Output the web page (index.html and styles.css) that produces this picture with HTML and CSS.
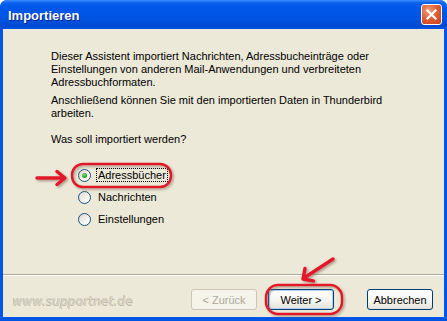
FILE: index.html
```html
<!DOCTYPE html>
<html>
<head>
    <title>Importieren</title>
    <link rel="stylesheet" href="styles.css">
</head>
<body>
    <div class="window">
        <div class="titlebar">
            <span class="title">Importieren</span>
            <span class="close-btn">
                <svg width="13" height="13" viewBox="0 0 13 13">
                    <path d="M2.5 2.5 L10.5 10.5 M10.5 2.5 L2.5 10.5" stroke="#fff" stroke-width="2.2" stroke-linecap="square"/>
                </svg>
            </span>
        </div>

        <div class="client">
            <div class="main">
                <p class="intro">Dieser Assistent importiert Nachrichten, Adressbucheinträge oder Einstellungen von anderen Mail-Anwendungen und verbreiteten Adressbuchformaten.</p>
                <p class="intro second">Anschließend können Sie mit den importierten Daten in Thunderbird arbeiten.</p>
                <p class="question">Was soll importiert werden?</p>

                <div class="radio-list">
                    <div class="radio-row">
                        <span class="radio checked"></span>
                        <span class="label focused">Adressbücher</span>
                    </div>
                    <div class="radio-row">
                        <span class="radio"></span>
                        <span class="label">Nachrichten</span>
                    </div>
                    <div class="radio-row">
                        <span class="radio"></span>
                        <span class="label">Einstellungen</span>
                    </div>
                </div>
            </div>

            <div class="separator"></div>

            <div class="footer">
                <span class="watermark">www.supportnet.de</span>
                <button class="btn back" disabled>&lt; Zurück</button>
                <button class="btn next">Weiter &gt;</button>
                <button class="btn cancel">Abbrechen</button>
            </div>
        </div>

        <!-- red marks drawn over the screenshot -->
        <svg class="marks" width="447" height="321" viewBox="0 0 447 321">
            <defs>
                <filter id="shadow" x="-20%" y="-20%" width="140%" height="140%">
                    <feDropShadow dx="1.5" dy="1.5" stdDeviation="1" flood-color="#7a6a5a" flood-opacity="0.6"/>
                </filter>
            </defs>
            <g fill="none" stroke="#e3182a" stroke-linecap="round" stroke-linejoin="round" filter="url(#shadow)">
                <rect x="72" y="164" width="99" height="23" rx="11" stroke-width="2.5"/>
                <rect x="266" y="285" width="76" height="29" rx="12" stroke-width="2.5"/>
                <path d="M37 178 H64 M57 171.5 L65 178 L57 184.5" stroke-width="3.5"/>
                <path d="M333 259 L304 278 M305 268.5 L303 279 L313.5 281" stroke-width="3.5"/>
            </g>
        </svg>
    </div>
</body>
</html>
```

FILE: styles.css
```css
body {
    margin: 0;
    font-family: "Liberation Sans", Arial, sans-serif;
    font-size: 11px;
    color: #000;
}

.window {
    position: relative;
    width: 447px;
    height: 321px;
    display: flex;
    flex-direction: column;
    background-color: #0055e5;
    border-radius: 7px 7px 0 0;
    overflow: hidden;
}

.titlebar {
    height: 29px;
    flex-shrink: 0;
    display: flex;
    align-items: center;
    justify-content: space-between;
    padding: 0 5px 0 8px;
    background: linear-gradient(#3b8dff 0, #0a61ec 3px, #0058e9 7px, #0053e1 20px, #0049cf 26px, #0053e3 29px);
}

.title {
    color: #fff;
    font-weight: bold;
    font-size: 13px;
    text-shadow: 1px 1px 0 #0a1e8c;
    margin-top: 1px;
}

.close-btn {
    width: 19px;
    height: 19px;
    border: 1px solid #fff;
    border-radius: 3px;
    display: flex;
    align-items: center;
    justify-content: center;
    background: radial-gradient(circle at 35% 30%, #f0a080 0, #e0603a 45%, #c23d17 100%);
}

.client {
    flex: 1;
    margin: 0 3px 4px 3px;
    background-color: #ece9d8;
    display: flex;
    flex-direction: column;
}

.main {
    height: 245px;
    padding: 21px 0 0 48px;
    box-sizing: border-box;
}

p {
    margin: 0;
    line-height: 13px;
    width: 345px;
}

.intro.second {
    margin-top: 5px;
}

.question {
    margin-top: 13px;
}

.radio-list {
    margin: 18px 0 0 27px;
}

.radio-row {
    height: 22px;
    display: flex;
    align-items: center;
}

.radio {
    width: 11px;
    height: 11px;
    border: 1px solid #1c5180;
    border-radius: 50%;
    background: linear-gradient(135deg, #dcd8cc 0, #f4f3ee 60%, #ffffff 100%);
    display: flex;
    align-items: center;
    justify-content: center;
    margin-right: 5px;
}

.radio.checked::after {
    content: "";
    width: 5px;
    height: 5px;
    border-radius: 50%;
    background: radial-gradient(circle at 40% 35%, #8be08b 0, #21a121 60%, #1a8a1a 100%);
}

.label {
    padding: 0 1px;
    line-height: 12px;
    border: 1px solid transparent;
}

.label.focused {
    border: 1px dotted #000;
}

.separator {
    height: 0;
    border-top: 1px solid #aca899;
    border-bottom: 1px solid #fff;
}

.footer {
    flex: 1;
    display: flex;
    align-items: flex-start;
    padding: 13px 11px 0 10px;
}

.watermark {
    flex: 1;
    margin-top: 5px;
    font-family: "DejaVu Sans", Verdana, sans-serif;
    font-style: italic;
    font-size: 12px;
    color: #dcd8c8;
    text-shadow: -1px 0 0 #bdb9a9, 0 1px 0 #bdb9a9, 1px 0 0 #f6f4ea;
    letter-spacing: 0.2px;
}

.btn {
    width: 66px;
    height: 21px;
    padding: 0;
    font-family: "Liberation Sans", Arial, sans-serif;
    font-size: 11px;
    color: #000;
    border: 1px solid #003c74;
    border-radius: 3px;
    background: linear-gradient(#ffffff 0, #f4f4f0 60%, #e3e1d8 100%);
}

.btn.back {
    margin-right: 11px;
    color: #aca899;
    border-color: #c9c7ba;
    background: #f5f4ea;
}

.btn.next {
    margin-right: 33px;
    box-shadow: inset 0 0 0 1px #b6cff5;
}

.marks {
    position: absolute;
    top: 0;
    left: 0;
    pointer-events: none;
}
```
